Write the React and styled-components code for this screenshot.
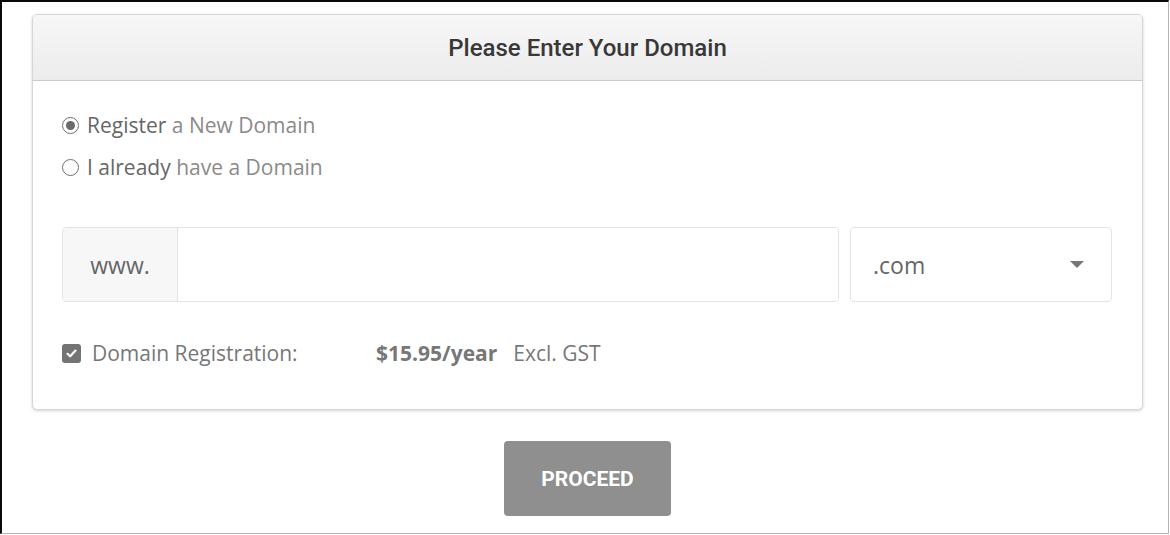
import styled, { createGlobalStyle } from "styled-components";

const GlobalStyle = createGlobalStyle`
   html, body {
      margin: 0;
      padding: 0;
      background: #fff;
   }
   * {
      box-sizing: border-box;
   }
`;

const App = () => {
   return (
      <>
         <GlobalStyle />
         <Frame>
            <Card>
               <Header>Please Enter Your Domain</Header>
               <Body>
                  <RadioRow>
                     <Radio checked />
                     <span>
                        <Strong>Register</Strong> a New Domain
                     </span>
                  </RadioRow>
                  <RadioRow>
                     <Radio />
                     <span>
                        <Strong>I already</Strong> have a Domain
                     </span>
                  </RadioRow>

                  <DomainRow>
                     <InputGroup>
                        <Addon>www.</Addon>
                        <TextInput />
                     </InputGroup>
                     <Select>
                        <span>.com</span>
                        <Caret />
                     </Select>
                  </DomainRow>

                  <PriceRow>
                     <PriceLabel>
                        <Check>
                           <svg width="13" height="13" viewBox="0 0 13 13">
                              <path d="M2.5 6.8 L5.2 9.3 L10.5 3.6" fill="none" stroke="#fff" strokeWidth="2.2" strokeLinecap="round" strokeLinejoin="round" />
                           </svg>
                        </Check>
                        Domain Registration:
                     </PriceLabel>
                     <Price>$15.95/year</Price>
                     <Tax>Excl. GST</Tax>
                  </PriceRow>
               </Body>
            </Card>
            <Actions>
               <Button>PROCEED</Button>
            </Actions>
         </Frame>
      </>
   );
};

const Frame = styled.div`
   width: 1169px;
   height: 534px;
   border-left: 2px solid #0a0a0a;
   border-top: 2px solid #0a0a0a;
   border-right: 1px solid #b4b4b4;
   border-bottom: 1px solid #b4b4b4;
   padding: 12px 0 0 30px;
   font-family: "Open Sans", "Liberation Sans", sans-serif;
`;

const Card = styled.div`
   width: 1111px;
   border: 1px solid #d6d6d6;
   border-radius: 5px;
   background: #fff;
   box-shadow: 0 1px 3px rgba(0, 0, 0, 0.18);
   overflow: hidden;
`;

const Header = styled.div`
   height: 66px;
   display: flex;
   align-items: center;
   justify-content: center;
   background: linear-gradient(#f7f7f7, #ececec);
   border-bottom: 1px solid #c9c9c9;
   font-family: Roboto, "Liberation Sans", sans-serif;
   font-weight: 500;
   font-size: 24px;
   color: #383838;
`;

const Body = styled.div`
   padding: 23px 30px 42px 29px;
`;

const RadioRow = styled.label`
   display: flex;
   align-items: center;
   gap: 8px;
   height: 42px;
   font-size: 21px;
   color: #8a8a8a;
`;

const Strong = styled.span`
   color: #666;
`;

const Radio = styled.span`
   width: 17px;
   height: 17px;
   border-radius: 50%;
   border: 1.5px solid #6f6f6f;
   display: inline-flex;
   align-items: center;
   justify-content: center;
   flex-shrink: 0;

   &::after {
      content: "";
      display: ${(p) => (p.checked ? "block" : "none")};
      width: 9px;
      height: 9px;
      border-radius: 50%;
      background: #6a6a6a;
   }
`;

const DomainRow = styled.div`
   display: flex;
   gap: 11px;
   margin-top: 39px;
   height: 75px;
`;

const InputGroup = styled.div`
   flex: 1;
   display: flex;
   border: 1px solid #e3e3e3;
   border-radius: 4px;
   overflow: hidden;
`;

const Addon = styled.div`
   width: 115px;
   display: flex;
   align-items: center;
   justify-content: center;
   background: #f7f7f7;
   border-right: 1px solid #e3e3e3;
   font-size: 23px;
   color: #666;
`;

const TextInput = styled.input`
   flex: 1;
   border: none;
   outline: none;
   background: #fff;
   font: inherit;
`;

const Select = styled.div`
   width: 262px;
   display: flex;
   align-items: center;
   justify-content: space-between;
   padding: 0 27px 0 22px;
   border: 1px solid #e3e3e3;
   border-radius: 4px;
   font-size: 23px;
   color: #666;
`;

const Caret = styled.span`
   width: 0;
   height: 0;
   border-left: 7px solid transparent;
   border-right: 7px solid transparent;
   border-top: 7px solid #777;
`;

const PriceRow = styled.div`
   display: flex;
   align-items: center;
   margin-top: 37px;
   font-size: 21px;
   color: #777;
`;

const PriceLabel = styled.div`
   width: 314px;
   display: flex;
   align-items: center;
   gap: 11px;
`;

const Check = styled.span`
   width: 19px;
   height: 19px;
   border-radius: 3px;
   background: #747474;
   display: inline-flex;
   align-items: center;
   justify-content: center;
`;

const Price = styled.span`
   font-weight: 700;
   margin-right: 16px;
`;

const Tax = styled.span`
   color: #777;
`;

const Actions = styled.div`
   width: 1111px;
   display: flex;
   justify-content: center;
   margin-top: 31px;
`;

const Button = styled.button`
   width: 167px;
   height: 75px;
   border: none;
   border-radius: 4px;
   background: #8f8f8f;
   color: #fff;
   font-family: Roboto, "Liberation Sans", sans-serif;
   font-weight: 700;
   font-size: 21px;
`;

export default App;
